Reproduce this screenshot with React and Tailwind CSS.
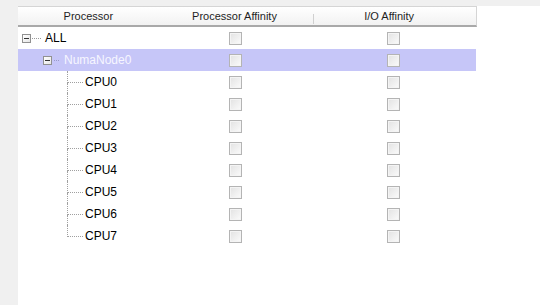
import React from "react";

const cpus = ["CPU0", "CPU1", "CPU2", "CPU3", "CPU4", "CPU5", "CPU6", "CPU7"];

// Caja de expandir/contraer del árbol
const Toggle = () => (
  <span className="w-[9px] h-[9px] border border-[#919191] bg-gradient-to-br from-white to-[#e6e6e6] flex items-center justify-center shrink-0">
    <span className="w-[5px] h-px bg-[#333]" />
  </span>
);

const Check = () => (
  <span className="w-[13px] h-[13px] border border-[#b4b4b4] bg-gradient-to-br from-[#e2e2e2] to-[#fbfbfb] shadow-[inset_0_0_0_1px_#f4f4f4] block" />
);

const Cells = () => (
  <>
    <div className="w-[158px] flex justify-center items-center">
      <Check />
    </div>
    <div className="w-[162px] flex justify-center items-center pr-[4px]">
      <Check />
    </div>
  </>
);

export default function App() {
  return (
    <div
      className="w-[540px] h-[305px] bg-[#f0f0f0] pt-[6px] pl-[18px] flex overflow-hidden"
      style={{ fontFamily: '"Liberation Sans", Arial, sans-serif' }}
    >
      <div className="flex-1 bg-white">
        {/* Cabecera */}
        <div className="w-[459px] h-[21px] flex border-t border-r border-[#d5d5d5] border-b-2 border-b-[#a9a9a9] bg-gradient-to-b from-white to-[#f2f2f2] text-[11px] text-[#1e1e1e]">
          <div className="w-[139px] flex items-center justify-center pl-[2px]">Processor</div>
          <div className="w-[158px] flex items-center justify-center pr-[2px] relative">
            Processor Affinity
            <span className="absolute right-0 top-[7px] h-[10px] w-px bg-[#d0d0d0]" />
          </div>
          <div className="w-[162px] flex items-center justify-center pr-[12px]">I/O Affinity</div>
        </div>

        {/* Filas */}
        <div className="w-[459px] text-[11px] text-black border-r border-transparent">
          <div className="h-[22px] flex">
            <div className="w-[139px] flex items-center pl-[4px]">
              <Toggle />
              <span className="w-[9px] border-t border-dotted border-[#9a9a9a] mx-[1px]" />
              <span className="ml-[3px] text-[12px]">ALL</span>
            </div>
            <Cells />
          </div>

          <div className="h-[22px] flex bg-[#c6c6f8]">
            <div className="w-[139px] flex items-center pl-[25px]">
              <Toggle />
              <span className="w-[5px] border-t border-dotted border-[#9a9aca] mx-[2px]" />
              <span className="ml-[3px] text-[12px] text-[#f6f6ff]">NumaNode0</span>
            </div>
            <Cells />
          </div>

          {cpus.map((cpu, i) => (
            <div key={cpu} className="h-[22px] flex">
              <div className="w-[139px] flex items-center pl-[49px]">
                <div className="w-[16px] self-stretch flex flex-col">
                  <div className="flex-1 border-l border-b border-dotted border-[#a0a0a0]" />
                  <div
                    className={
                      i === cpus.length - 1
                        ? "flex-1"
                        : "flex-1 border-l border-dotted border-[#a0a0a0]"
                    }
                  />
                </div>
                <span className="ml-[2px] text-[12px]">{cpu}</span>
              </div>
              <Cells />
            </div>
          ))}
        </div>
      </div>
    </div>
  );
}
